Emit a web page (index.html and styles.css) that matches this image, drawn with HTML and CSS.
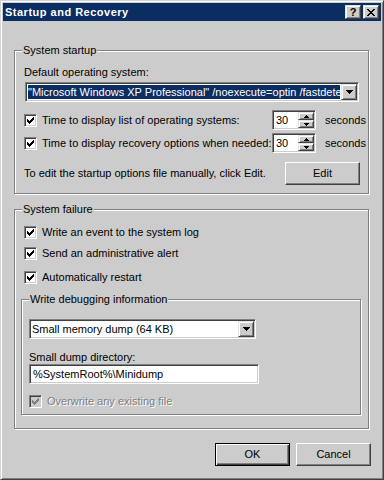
FILE: index.html
```html
<!DOCTYPE html>
<html lang="en">
<head>
  <meta charset="UTF-8" />
  <title>Startup and Recovery</title>
  <link rel="stylesheet" href="styles.css">
</head>
<body>

  <div class="window">
    <!-- Title bar -->
    <div class="titlebar">
      <span class="title">Startup and Recovery</span>
      <div class="caption-btns">
        <span class="cap-btn help">?</span>
        <span class="cap-btn close">
          <svg width="8" height="7" viewBox="0 0 8 7" shape-rendering="crispEdges"><path d="M0 0h2v1h-2zM6 0h2v1h-2zM1 1h2v1h-2zM5 1h2v1h-2zM2 2h4v1h-4zM3 3h2v1h-2zM2 4h4v1h-4zM1 5h2v1h-2zM5 5h2v1h-2zM0 6h2v1h-2zM6 6h2v1h-2z"/></svg>
        </span>
      </div>
    </div>

    <div class="content">
      <!-- System startup -->
      <div class="group startup">
        <div class="group-title">System startup</div>
        <div class="field-label os-label">Default operating system:</div>
        <div class="combo os-combo">
          <span class="combo-text selected">"Microsoft Windows XP Professional" /noexecute=optin /fastdetect</span>
          <span class="drop-btn">
            <svg width="7" height="4" viewBox="0 0 7 4" shape-rendering="crispEdges"><path d="M0 0h7v1h-7zM1 1h5v1h-5zM2 2h3v1h-3zM3 3h1v1h-1z"/></svg>
          </span>
        </div>

        <div class="spin-row first">
          <div class="check">
            <span class="box"><svg width="7" height="7" viewBox="0 0 7 7" shape-rendering="crispEdges"><path d="M0 2h1v3h-1zM1 3h1v3h-1zM2 4h1v3h-1zM3 3h1v3h-1zM4 2h1v3h-1zM5 1h1v3h-1zM6 0h1v3h-1z"/></svg></span>
            <span>Time to display list of operating systems:</span>
          </div>
          <div class="spin">
            <span class="spin-value">30</span>
            <div class="spin-btns">
              <span class="spin-btn"><svg width="5" height="3" viewBox="0 0 5 3" shape-rendering="crispEdges"><path d="M2 0h1v1h-1zM1 1h3v1h-3zM0 2h5v1h-5z"/></svg></span>
              <span class="spin-btn"><svg width="5" height="3" viewBox="0 0 5 3" shape-rendering="crispEdges"><path d="M0 0h5v1h-5zM1 1h3v1h-3zM2 2h1v1h-1z"/></svg></span>
            </div>
          </div>
          <span class="unit">seconds</span>
        </div>

        <div class="spin-row second">
          <div class="check">
            <span class="box"><svg width="7" height="7" viewBox="0 0 7 7" shape-rendering="crispEdges"><path d="M0 2h1v3h-1zM1 3h1v3h-1zM2 4h1v3h-1zM3 3h1v3h-1zM4 2h1v3h-1zM5 1h1v3h-1zM6 0h1v3h-1z"/></svg></span>
            <span>Time to display recovery options when needed:</span>
          </div>
          <div class="spin">
            <span class="spin-value">30</span>
            <div class="spin-btns">
              <span class="spin-btn"><svg width="5" height="3" viewBox="0 0 5 3" shape-rendering="crispEdges"><path d="M2 0h1v1h-1zM1 1h3v1h-3zM0 2h5v1h-5z"/></svg></span>
              <span class="spin-btn"><svg width="5" height="3" viewBox="0 0 5 3" shape-rendering="crispEdges"><path d="M0 0h5v1h-5zM1 1h3v1h-3zM2 2h1v1h-1z"/></svg></span>
            </div>
          </div>
          <span class="unit">seconds</span>
        </div>

        <div class="edit-row">
          <span>To edit the startup options file manually, click Edit.</span>
          <button class="btn">Edit</button>
        </div>
      </div>

      <!-- System failure -->
      <div class="group failure">
        <div class="group-title">System failure</div>
        <div class="check row-log">
          <span class="box"><svg width="7" height="7" viewBox="0 0 7 7" shape-rendering="crispEdges"><path d="M0 2h1v3h-1zM1 3h1v3h-1zM2 4h1v3h-1zM3 3h1v3h-1zM4 2h1v3h-1zM5 1h1v3h-1zM6 0h1v3h-1z"/></svg></span>
          <span>Write an event to the system log</span>
        </div>
        <div class="check row-alert">
          <span class="box"><svg width="7" height="7" viewBox="0 0 7 7" shape-rendering="crispEdges"><path d="M0 2h1v3h-1zM1 3h1v3h-1zM2 4h1v3h-1zM3 3h1v3h-1zM4 2h1v3h-1zM5 1h1v3h-1zM6 0h1v3h-1z"/></svg></span>
          <span>Send an administrative alert</span>
        </div>
        <div class="check row-restart">
          <span class="box"><svg width="7" height="7" viewBox="0 0 7 7" shape-rendering="crispEdges"><path d="M0 2h1v3h-1zM1 3h1v3h-1zM2 4h1v3h-1zM3 3h1v3h-1zM4 2h1v3h-1zM5 1h1v3h-1zM6 0h1v3h-1z"/></svg></span>
          <span>Automatically restart</span>
        </div>

        <!-- Write debugging information -->
        <div class="group debug">
          <div class="group-title">Write debugging information</div>
          <div class="combo dump-combo">
            <span class="combo-text">Small memory dump (64 KB)</span>
            <span class="drop-btn">
              <svg width="7" height="4" viewBox="0 0 7 4" shape-rendering="crispEdges"><path d="M0 0h7v1h-7zM1 1h5v1h-5zM2 2h3v1h-3zM3 3h1v1h-1z"/></svg>
            </span>
          </div>
          <div class="field-label dir-label">Small dump directory:</div>
          <div class="textbox">%SystemRoot%\Minidump</div>
          <div class="check disabled row-overwrite">
            <span class="box"><svg width="7" height="7" viewBox="0 0 7 7" shape-rendering="crispEdges"><path d="M0 2h1v3h-1zM1 3h1v3h-1zM2 4h1v3h-1zM3 3h1v3h-1zM4 2h1v3h-1zM5 1h1v3h-1zM6 0h1v3h-1z"/></svg></span>
            <span>Overwrite any existing file</span>
          </div>
        </div>
      </div>

      <div class="actions">
        <button class="btn default">OK</button>
        <button class="btn">Cancel</button>
      </div>
    </div>
  </div>

</body>
</html>
```

FILE: styles.css
```css
body {
  margin: 0;
  font-family: "Liberation Sans", Arial, sans-serif;
  font-size: 11px;
  line-height: 13px;
  color: #000;
}

/* Window frame */
.window {
  width: 384px;
  height: 480px;
  box-sizing: border-box;
  background: #cccccc;
  border: 1px solid;
  border-color: #d4d4d4 #404040 #404040 #d4d4d4;
  box-shadow: inset 1px 1px #fff, inset -1px -1px #808080;
  padding: 2px;
  display: flex;
  flex-direction: column;
}

.titlebar {
  height: 18px;
  background: #0a2d62;
  display: flex;
  justify-content: space-between;
  align-items: flex-start;
  padding: 0 2px;
}
.title {
  color: #fff;
  font-weight: bold;
  letter-spacing: 0.5px;
  line-height: 18px;
}
.caption-btns {
  display: flex;
  gap: 2px;
  margin-top: 2px;
}
.cap-btn {
  width: 16px;
  height: 14px;
  box-sizing: border-box;
  background: #cccccc;
  border: 1px solid;
  border-color: #e4e4e4 #404040 #404040 #e4e4e4;
  box-shadow: inset 1px 1px #fff, inset -1px -1px #808080;
  display: flex;
  justify-content: center;
  align-items: center;
  font-weight: bold;
  line-height: 12px;
}
.cap-btn svg {
  display: block;
}

.content {
  flex: 1;
  padding: 29px 12px 0 11px;
}

/* Etched group boxes */
.group {
  border: 1px solid #808080;
  box-shadow: inset 1px 1px #fff, 1px 1px #fff;
  padding: 0 8px 8px 9px;
}
.group-title {
  display: table;
  margin: -7px 0 0 -2px;
  padding: 0 1px;
  background: #cccccc;
}
.failure {
  margin-top: 15px;
  padding-bottom: 13px;
}
.debug {
  margin: 15px -1px 0 -3px;
  padding: 0 8px 6px 7px;
}
.debug .group-title {
  margin-left: 0;
}

.field-label {
  white-space: nowrap;
}
.os-label {
  margin-top: 9px;
}

/* Sunken fields */
.combo,
.textbox,
.spin {
  height: 20px;
  box-sizing: border-box;
  background: #fff;
  border: 1px solid;
  border-color: #808080 #fff #fff #808080;
  box-shadow: inset 1px 1px #404040, inset -1px -1px #cccccc;
}
.combo {
  display: flex;
  padding: 1px;
}
.combo-text {
  flex: 1;
  min-width: 0;
  overflow: hidden;
  white-space: nowrap;
  line-height: 16px;
  padding-left: 1px;
}
.combo-text.selected {
  background: #0a2d62;
  color: #fff;
  margin: 1px;
  padding-left: 0;
  line-height: 14px;
}
.drop-btn,
.spin-btn {
  box-sizing: border-box;
  background: #cccccc;
  border: 1px solid;
  border-color: #e4e4e4 #404040 #404040 #e4e4e4;
  box-shadow: inset 1px 1px #fff, inset -1px -1px #808080;
  display: flex;
  justify-content: center;
  align-items: center;
}
.drop-btn {
  width: 16px;
  height: 16px;
}
.drop-btn svg,
.spin-btn svg {
  display: block;
}
.os-combo {
  margin: 3px 1px 0 1px;
}
.dump-combo {
  width: 227px;
  margin-top: 13px;
}
.dir-label {
  margin-top: 12px;
}
.textbox {
  width: 230px;
  padding: 0 0 0 3px;
  line-height: 18px;
}

/* Checkboxes */
.check {
  display: flex;
  align-items: center;
  height: 13px;
  white-space: nowrap;
}
.box {
  width: 13px;
  height: 13px;
  flex: none;
  box-sizing: border-box;
  margin-right: 5px;
  background: #fff;
  border: 1px solid;
  border-color: #808080 #fff #fff #808080;
  box-shadow: inset 1px 1px #404040, inset -1px -1px #cccccc;
  display: flex;
  justify-content: center;
  align-items: center;
}
.box svg {
  display: block;
}
.check.disabled {
  color: #808080;
  text-shadow: 1px 1px #fff;
}
.check.disabled .box {
  background: #cccccc;
}
.check.disabled .box svg {
  fill: #808080;
}
.row-log {
  margin-top: 10px;
}
.row-alert {
  margin-top: 8px;
}
.row-restart {
  margin-top: 11px;
}
.row-overwrite {
  margin-top: 11px;
}

/* Spin rows */
.spin-row {
  display: grid;
  grid-template-columns: 248px 44px auto;
  align-items: center;
  height: 20px;
}
.spin-row.first {
  margin-top: 8px;
}
.spin-row.second {
  margin-top: 3px;
}
.spin {
  display: flex;
  padding: 1px;
}
.spin-value {
  flex: 1;
  padding-left: 2px;
  line-height: 16px;
}
.spin-btns {
  width: 16px;
  display: flex;
  flex-direction: column;
}
.spin-btn {
  height: 8px;
}
.unit {
  margin-left: 9px;
  white-space: nowrap;
}

.edit-row {
  display: flex;
  justify-content: space-between;
  align-items: center;
  margin-top: 9px;
}

/* Push buttons */
.btn {
  width: 75px;
  height: 23px;
  box-sizing: border-box;
  padding: 0;
  font: inherit;
  color: #000;
  background: #cccccc;
  border: 1px solid;
  border-color: #fff #404040 #404040 #fff;
  box-shadow: inset -1px -1px #808080;
}
.btn.default {
  border-color: #000;
  box-shadow: inset 1px 1px #fff, inset -1px -1px #404040, inset -2px -2px #808080;
}
.actions {
  display: flex;
  justify-content: flex-end;
  gap: 6px;
  margin: 14px -2px 0 0;
}
```
